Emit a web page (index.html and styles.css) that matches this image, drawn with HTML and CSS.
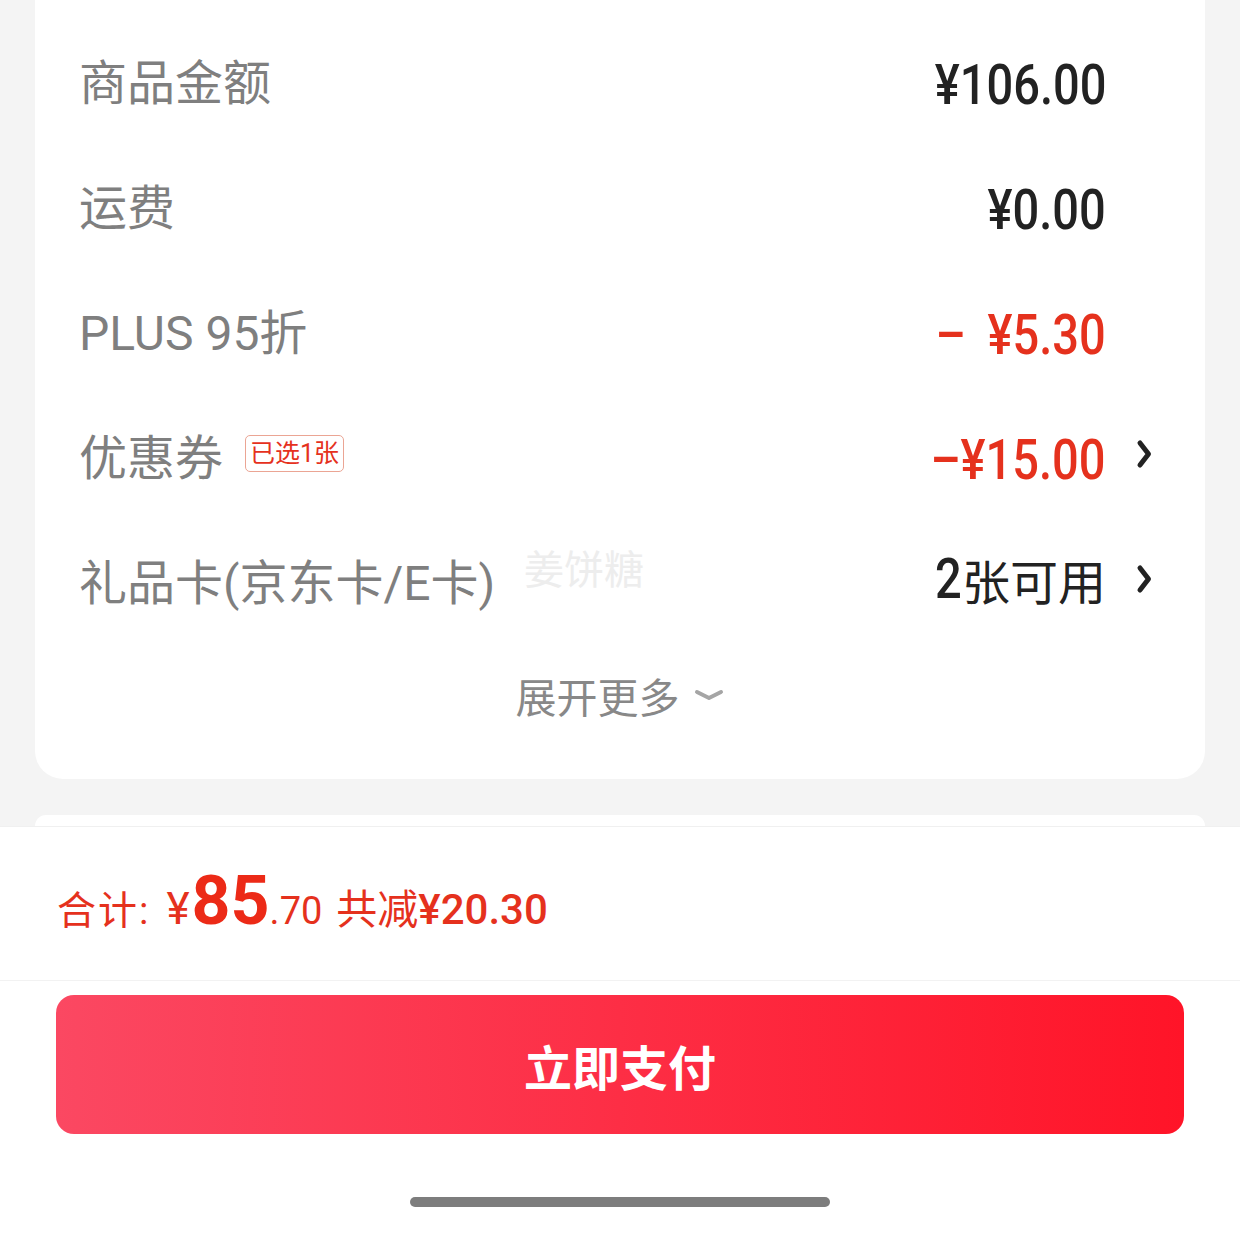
FILE: index.html
```html
<!DOCTYPE html>
<html lang="zh-CN">
<head>
    <meta charset="UTF-8">
    <meta name="viewport" content="width=device-width, initial-scale=1.0">
    <title>确认订单</title>
    <link rel="stylesheet" href="styles.css">
</head>
<body>
    <main class="page">
        <!-- Price summary -->
        <section class="card summary">
            <div class="row">
                <span class="label">商品金额</span>
                <span class="value"><span class="num">¥106.00</span></span>
                <span class="arrow"></span>
            </div>
            <div class="row">
                <span class="label">运费</span>
                <span class="value"><span class="num">¥0.00</span></span>
                <span class="arrow"></span>
            </div>
            <div class="row">
                <span class="label">PLUS 95折</span>
                <span class="value red"><span class="num"><span class="minus spaced">–</span>¥5.30</span></span>
                <span class="arrow"></span>
            </div>
            <div class="row">
                <span class="label">优惠券 <span class="tag">已选1张</span></span>
                <span class="value red"><span class="num"><span class="minus">–</span>¥15.00</span></span>
                <span class="arrow">
                    <svg width="16" height="30" viewBox="0 0 16 30"><polyline points="4,4 12.5,15 4,26" fill="none" stroke="#222" stroke-width="5" stroke-linecap="round" stroke-linejoin="round"/></svg>
                </span>
            </div>
            <div class="row">
                <span class="label">礼品卡(京东卡/E卡)</span>
                <span class="watermark">姜饼糖</span>
                <span class="value"><span class="num digit">2</span>张可用</span>
                <span class="arrow">
                    <svg width="16" height="30" viewBox="0 0 16 30"><polyline points="4,4 12.5,15 4,26" fill="none" stroke="#222" stroke-width="5" stroke-linecap="round" stroke-linejoin="round"/></svg>
                </span>
            </div>
            <div class="more">
                展开更多
                <svg width="30" height="14" viewBox="0 0 30 14"><polyline points="3,4 15,10 27,4" fill="none" stroke="#a5a5a5" stroke-width="4" stroke-linecap="round" stroke-linejoin="round"/></svg>
            </div>
        </section>

        <section class="card next"></section>
    </main>

    <footer class="bar">
        <div class="total">
            <span class="sum-label">合计:</span>
            <span class="yen">¥</span><span class="big">85</span><span class="cents">.70</span>
            <span class="saved">共减<span class="saved-num">¥20.30</span></span>
        </div>
        <div class="pay-wrap">
            <button class="pay">立即支付</button>
        </div>
        <div class="home-bar"></div>
    </footer>
</body>
</html>
```

FILE: styles.css
```css
body {
    margin: 0;
    padding: 0;
    background: #f4f4f4;
    font-family: Roboto, "Noto Sans CJK SC", sans-serif;
    overflow: hidden;
}
.page {
    padding: 0 35px;
}
.card {
    background: #fff;
}
.summary {
    border-radius: 0 0 28px 28px;
    padding: 16px 53px 30px 44px;
}
.row {
    position: relative;
    display: flex;
    align-items: center;
    height: 125px;
}
.label {
    flex: 1;
    display: flex;
    align-items: center;
    font-size: 48px;
    color: #7f7f7f;
}
.value {
    display: flex;
    align-items: center;
    font-size: 48px;
    color: #222;
}
/* condensed look for prices */
.num {
    display: inline-block;
    font-family: Roboto, sans-serif;
    font-size: 56px;
    font-weight: 500;
    transform: scaleX(0.84);
    transform-origin: right center;
    margin-top: 12px;
}
.minus {
    margin-right: 0;
}
.minus.spaced {
    margin-right: 26px;
}
.digit {
    margin-top: 0;
}
.red {
    color: #e5311d;
}
.arrow {
    width: 46px;
    display: flex;
    justify-content: flex-end;
}
.arrow svg {
    display: block;
}
.tag {
    margin-left: 22px;
    font-size: 25px;
    line-height: 35px;
    padding: 0 4px;
    color: #e5311d;
    border: 1px solid #eba594;
    border-radius: 5px;
}
.watermark {
    position: absolute;
    left: 445px;
    top: 22px;
    font-size: 40px;
    color: #ededed;
}
.more {
    height: 108px;
    display: flex;
    align-items: center;
    justify-content: center;
    gap: 14px;
    font-size: 41px;
    color: #888;
    margin-right: -8px;
}
.next {
    margin-top: 36px;
    height: 11px;
    border-radius: 28px 28px 0 0;
}
.bar {
    background: #fff;
    border-top: 1px solid #f0f0f0;
    padding-bottom: 40px;
}
.total {
    height: 154px;
    display: flex;
    align-items: baseline;
    padding: 34px 57px 0;
    box-sizing: border-box;
    color: #e5311d;
    border-bottom: 1px solid #f2f2f2;
}
.sum-label {
    font-size: 39px;
    letter-spacing: 2px;
}
.yen {
    margin-left: 16px;
    font-size: 44px;
}
.big {
    margin-left: 2px;
    font-size: 68px;
    font-weight: 700;
    color: #ec2a17;
}
.cents {
    font-size: 38px;
}
.saved {
    margin-left: 14px;
    font-size: 41px;
}
.saved-num {
    font-size: 42px;
    font-weight: 500;
}
.pay-wrap {
    padding: 14px 56px 0;
}
.pay {
    display: block;
    width: 100%;
    height: 139px;
    border: none;
    border-radius: 18px;
    background: linear-gradient(90deg, #fb4862, #ff1428);
    color: #fff;
    font-family: "Noto Sans CJK SC", sans-serif;
    font-size: 48px;
    font-weight: 700;
}
.home-bar {
    width: 420px;
    height: 10px;
    margin: 63px auto 0;
    border-radius: 5px;
    background: #7d7d7d;
}
```
